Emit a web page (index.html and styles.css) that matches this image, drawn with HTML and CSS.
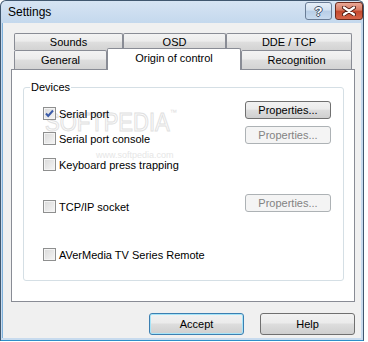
FILE: index.html
```html
<!DOCTYPE html>
<html lang="en">
<head>
    <meta charset="UTF-8">
    <title>Settings</title>
    <link rel="stylesheet" href="styles.css">
</head>
<body>
    <div class="window">
        <div class="titlebar">
            <span class="title">Settings</span>
            <div class="caption-buttons">
                <span class="cap-btn help-btn">?</span>
                <span class="cap-btn close-btn">
                    <svg width="14" height="10" viewBox="0 0 14 10">
                        <path d="M2 1.5 L12 8.5 M12 1.5 L2 8.5" stroke="#4a1a12" stroke-width="4" stroke-linecap="round"/>
                        <path d="M2 1.5 L12 8.5 M12 1.5 L2 8.5" stroke="#fff" stroke-width="2.2" stroke-linecap="round"/>
                    </svg>
                </span>
            </div>
        </div>
        <div class="client">
            <div class="tabs">
                <div class="tab-row row-back">
                    <div class="tab tab-sounds">Sounds</div>
                    <div class="tab tab-osd">OSD</div>
                    <div class="tab tab-dde">DDE / TCP</div>
                </div>
                <div class="tab-row row-front">
                    <div class="tab tab-general">General</div>
                    <div class="tab tab-origin selected">Origin of control</div>
                    <div class="tab tab-recog">Recognition</div>
                </div>
            </div>
            <div class="panel">
                <fieldset class="group">
                    <legend>Devices</legend>
                    <div class="watermark">SOFTPEDIA<span class="tm">™</span></div>
                    <div class="watermark-url">www.softpedia.com</div>
                    <div class="group-body">
                        <div class="option first">
                            <label class="check-label"><span class="checkbox checked">
                                <svg width="11" height="11" viewBox="0 0 11 11"><path d="M2 5.5 L4.2 8 L9 2.5" fill="none" stroke="#3b5ba8" stroke-width="2"/></svg>
                            </span>Serial port</label>
                            <span class="btn">Properties...</span>
                        </div>
                        <div class="option second">
                            <label class="check-label"><span class="checkbox"></span>Serial port console</label>
                            <span class="btn disabled">Properties...</span>
                        </div>
                        <div class="option third">
                            <label class="check-label"><span class="checkbox"></span>Keyboard press trapping</label>
                        </div>
                        <div class="option fourth">
                            <label class="check-label"><span class="checkbox"></span>TCP/IP socket</label>
                            <span class="btn disabled">Properties...</span>
                        </div>
                        <div class="option fifth">
                            <label class="check-label"><span class="checkbox"></span>AVerMedia TV Series Remote</label>
                        </div>
                    </div>
                </fieldset>
            </div>
            <div class="dialog-buttons">
                <span class="btn big default">Accept</span>
                <span class="btn big">Help</span>
            </div>
        </div>
    </div>
</body>
</html>
```
FILE: styles.css
```css
body {
    margin: 0;
    background: #fff;
    font-family: "Liberation Sans", Arial, sans-serif;
    font-size: 11px;
    color: #000;
}
.window {
    width: 364px;
    height: 341px;
    box-sizing: border-box;
    border: 1px solid #40576f;
    border-bottom-color: #2e8fc8;
    border-radius: 6px 6px 0 0;
    background: linear-gradient(#d6e4f3, #c4d8ed 22px, #c8dbee);
    padding: 0 2px 2px;
    display: flex;
    flex-direction: column;
}
.titlebar {
    height: 22px;
    display: flex;
    justify-content: space-between;
    align-items: flex-start;
    margin-right: -2px;
}
.title {
    font-size: 12px;
    padding: 4px 0 0 5px;
    color: #000;
}
.caption-buttons {
    display: flex;
    gap: 3px;
    padding-top: 1px;
}
.cap-btn {
    height: 18px;
    box-sizing: border-box;
    border-radius: 3px;
    display: flex;
    align-items: center;
    justify-content: center;
}
.help-btn {
    width: 27px;
    border: 1px solid #6a7d96;
    background: linear-gradient(#e6eff8, #d2e1f1 45%, #b7cde6 50%, #c8dbef);
    color: #fff;
    font-weight: bold;
    font-size: 13px;
    text-shadow: -1px 0 #3d4f66, 1px 0 #3d4f66, 0 -1px #3d4f66, 0 1px #3d4f66;
}
.close-btn {
    width: 28px;
    border: 1px solid #6b2a1c;
    background: linear-gradient(#e9a897, #d77a62 45%, #c2472c 50%, #d6654a);
}
.client {
    flex: 1;
    background: #f0f0f0;
    padding: 10px 0 0 8px;
    border-left: 1px solid #7fb2dc;
    margin-left: -1px;
}
.tabs {
    margin-left: 3px;
    width: 338px;
}
.tab-row {
    display: flex;
}
.row-back {
    height: 17px;
}
.row-front {
    height: 19px;
    align-items: flex-end;
}
.tab {
    box-sizing: border-box;
    height: 100%;
    border: 1px solid #898c95;
    border-bottom: none;
    border-radius: 2px 2px 0 0;
    background: linear-gradient(#f3f3f3, #ececec 45%, #dedede 50%, #d3d3d3);
    text-align: center;
    line-height: 16px;
}
.row-front .tab {
    line-height: 18px;
}
.tab-sounds { width: 109px; }
.tab-osd { width: 103px; }
.tab-dde { width: 126px; }
.tab-general { width: 93px; }
.tab-origin { width: 134px; }
.tab-recog { width: 111px; }
.row-front .tab.selected {
    position: relative;
    height: 22px;
    margin-bottom: -1px;
    background: #fff;
    line-height: 17px;
    padding-top: 1px;
}
.panel {
    width: 344px;
    height: 233px;
    box-sizing: border-box;
    background: #fff;
    border: 1px solid #898c95;
}
.group {
    position: relative;
    margin: 11px 10px 0 11px;
    padding: 0;
    border: 1px solid #d5dfe5;
    border-radius: 3px;
}
.group legend {
    margin-left: 6px;
    padding: 0 1px;
    line-height: 13px;
}
.group-body {
    padding: 0 12px 19px 19px;
}
.option {
    display: flex;
    justify-content: space-between;
    align-items: flex-start;
    height: 13px;
}
.option.first { margin-top: 13px; }
.option.second { margin-top: 12px; }
.option.third { margin-top: 13px; }
.option.fourth { margin-top: 29px; }
.option.fifth { margin-top: 35px; }
.check-label {
    display: flex;
    align-items: center;
    gap: 3px;
    height: 13px;
    position: relative;
}
.checkbox {
    width: 13px;
    height: 13px;
    box-sizing: border-box;
    border: 1px solid #8e8f8f;
    background: linear-gradient(135deg, #d9d9d9, #f6f6f6);
    box-shadow: inset 0 0 0 1px #f4f4f4;
    display: flex;
    align-items: center;
    justify-content: center;
}
.checkbox svg {
    display: block;
}
.btn {
    display: block;
    width: 86px;
    height: 18px;
    box-sizing: border-box;
    border: 1px solid #707070;
    border-radius: 3px;
    background: linear-gradient(#f2f2f2, #ebebeb 45%, #dddddd 50%, #cfcfcf);
    text-align: center;
    line-height: 16px;
    margin-top: -6px;
    position: relative;
}
.btn.disabled {
    border-color: #adb2b5;
    background: #f4f4f4;
    color: #838383;
}
.dialog-buttons {
    width: 344px;
    display: flex;
    justify-content: flex-end;
    gap: 16px;
    margin-top: 11px;
}
.btn.big {
    width: 95px;
    height: 22px;
    line-height: 20px;
    margin-top: 0;
}
.btn.default {
    border-color: #3c7fb1;
    box-shadow: inset 0 0 0 1px #a6e4f8;
}
.watermark {
    position: absolute;
    left: 21px;
    top: 14px;
    font-size: 25px;
    letter-spacing: 0;
    color: #fdfdfd;
    -webkit-text-stroke: 1px #e0e0e0;
    transform: scaleX(0.88);
    transform-origin: left top;
}
.watermark .tm {
    font-size: 8px;
    vertical-align: top;
    -webkit-text-stroke: 0;
    color: #dcdcdc;
}
.watermark-url {
    position: absolute;
    left: 72px;
    top: 56px;
    font-size: 9px;
    color: #e6e6e6;
}
```
